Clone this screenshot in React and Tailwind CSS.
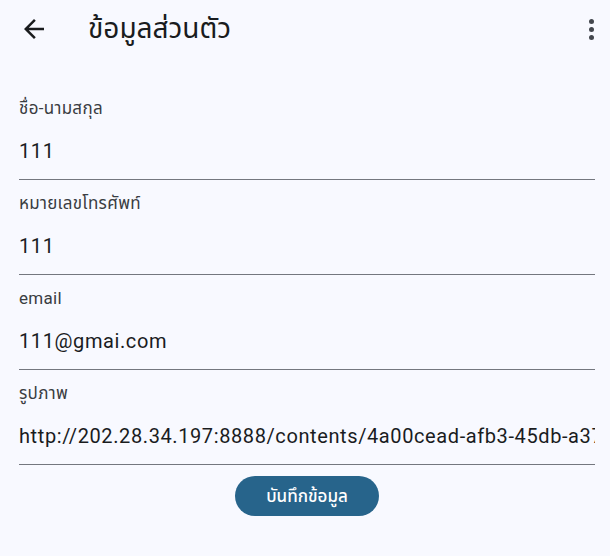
import React from "react";

const font = { fontFamily: "Roboto, 'Noto Sans', 'Noto Sans Thai', sans-serif" };

function Field({ label, value }) {
  return (
    <div className="pt-[11px] border-b border-[#74777f]">
      <div className="h-6 text-[17px] leading-6 tracking-[0.3px] text-[#3a3d42]">{label}</div>
      <div className="mt-[17px] mb-[14px] h-7 text-[20px] leading-7 tracking-[0.6px] text-[#1a1c1e] whitespace-nowrap overflow-hidden">
        {value}
      </div>
    </div>
  );
}

export default function App() {
  return (
    <div className="w-[610px] h-[556px] bg-[#f8f9ff] overflow-hidden font-['Roboto']" style={font}>
      <div className="h-[58px] flex items-center relative">
        <div className="w-[88px] flex items-center pl-[19px]">
          <svg width="30" height="30" viewBox="0 0 24 24" fill="#1a1c1e">
            <path d="M20 11H7.83l5.59-5.59L12 4l-8 8 8 8 1.41-1.41L7.83 13H20v-2z" />
          </svg>
        </div>
        <div className="text-[28px] leading-[34px] text-[#1a1c1e] -mt-[1px]">ข้อมูลส่วนตัว</div>
        <div className="ml-auto mr-[16px] flex flex-col items-center gap-[3px]">
          <div className="w-[5px] h-[5px] rounded-full bg-[#43474e]" />
          <div className="w-[5px] h-[5px] rounded-full bg-[#43474e]" />
          <div className="w-[5px] h-[5px] rounded-full bg-[#43474e]" />
        </div>
      </div>
      <div className="pt-[27px] pl-[19px] pr-[15px]">
        <Field label="ชื่อ-นามสกุล" value="111" />
        <Field label="หมายเลขโทรศัพท์" value="111" />
        <Field label="email" value="111@gmai.com" />
        <Field label="รูปภาพ" value="http://202.28.34.197:8888/contents/4a00cead-afb3-45db-a37f-0c1b2d3e4f5a" />
        <div className="flex justify-center pt-[11px]">
          <button className="w-[144px] h-10 rounded-full bg-[#27648b] text-white text-[17px] font-medium leading-10">
            บันทึกข้อมูล
          </button>
        </div>
      </div>
    </div>
  );
}
